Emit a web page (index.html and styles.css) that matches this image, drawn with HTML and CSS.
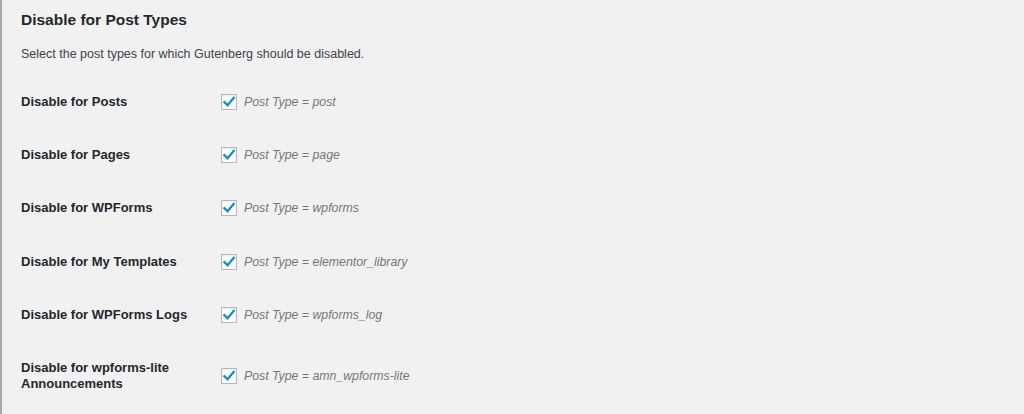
FILE: index.html
```html
<!DOCTYPE html>
<html>
<head>
<meta charset="utf-8">
<link rel="stylesheet" href="styles.css">
</head>
<body>
<div class="wrap">
  <h2 class="title">Disable for Post Types</h2>
  <p class="desc">Select the post types for which Gutenberg should be disabled.</p>
  <div class="table">
    <div class="row">
      <div class="th">Disable for Posts</div>
      <div class="td"><span class="cb"><svg viewBox="0 0 16 16" width="16" height="16"><path d="M3.4 8.2 L6.6 11.2 L12.7 3.8" /></svg></span><span class="note">Post Type = post</span></div>
    </div>
    <div class="row">
      <div class="th">Disable for Pages</div>
      <div class="td"><span class="cb"><svg viewBox="0 0 16 16" width="16" height="16"><path d="M3.4 8.2 L6.6 11.2 L12.7 3.8" /></svg></span><span class="note">Post Type = page</span></div>
    </div>
    <div class="row">
      <div class="th">Disable for WPForms</div>
      <div class="td"><span class="cb"><svg viewBox="0 0 16 16" width="16" height="16"><path d="M3.4 8.2 L6.6 11.2 L12.7 3.8" /></svg></span><span class="note">Post Type = wpforms</span></div>
    </div>
    <div class="row">
      <div class="th">Disable for My Templates</div>
      <div class="td"><span class="cb"><svg viewBox="0 0 16 16" width="16" height="16"><path d="M3.4 8.2 L6.6 11.2 L12.7 3.8" /></svg></span><span class="note">Post Type = elementor_library</span></div>
    </div>
    <div class="row">
      <div class="th">Disable for WPForms Logs</div>
      <div class="td"><span class="cb"><svg viewBox="0 0 16 16" width="16" height="16"><path d="M3.4 8.2 L6.6 11.2 L12.7 3.8" /></svg></span><span class="note">Post Type = wpforms_log</span></div>
    </div>
    <div class="row tall">
      <div class="th">Disable for wpforms-lite<br>Announcements</div>
      <div class="td"><span class="cb"><svg viewBox="0 0 16 16" width="16" height="16"><path d="M3.4 8.2 L6.6 11.2 L12.7 3.8" /></svg></span><span class="note">Post Type = amn_wpforms-lite</span></div>
    </div>
  </div>
</div>
</body>
</html>
```

FILE: styles.css
```css
html, body {
  margin: 0;
  padding: 0;
  height: 100%;
}
body {
  background: #f1f1f1;
  font-family: "Liberation Sans", Arial, sans-serif;
  color: #23282d;
  overflow: hidden;
}
.wrap {
  border-left: 2px solid #a7a7a7;
  min-height: 100%;
  box-sizing: border-box;
  padding-left: 19px;
  padding-top: 10px;
}
.title {
  margin: 0;
  font-size: 15.5px;
  font-weight: 700;
  line-height: 20px;
  color: #23282d;
}
.desc {
  margin: 14px 0 0;
  font-size: 12.5px;
  line-height: 20px;
  color: #3c434a;
}
.table {
  margin-top: 11px;
  display: flex;
  flex-direction: column;
}
.row {
  display: flex;
  align-items: center;
  height: 53.3px;
}
.row.tall {
  height: 70px;
}
.th {
  width: 200px;
  font-size: 13px;
  font-weight: 700;
  line-height: 16px;
  color: #23282d;
}
.td {
  display: flex;
  align-items: center;
  gap: 7px;
}
.cb {
  width: 16px;
  height: 16px;
  box-sizing: border-box;
  border: 1px solid #b4b9be;
  background: #fff;
  box-shadow: inset 0 1px 2px rgba(0,0,0,0.1);
  position: relative;
}
.cb svg {
  position: absolute;
  left: -1px;
  top: -1px;
  fill: none;
  stroke: #1e8cbe;
  stroke-width: 2.3;
  stroke-linecap: square;
}
.note {
  font-size: 12.3px;
  font-style: italic;
  color: #72777c;
}
```
